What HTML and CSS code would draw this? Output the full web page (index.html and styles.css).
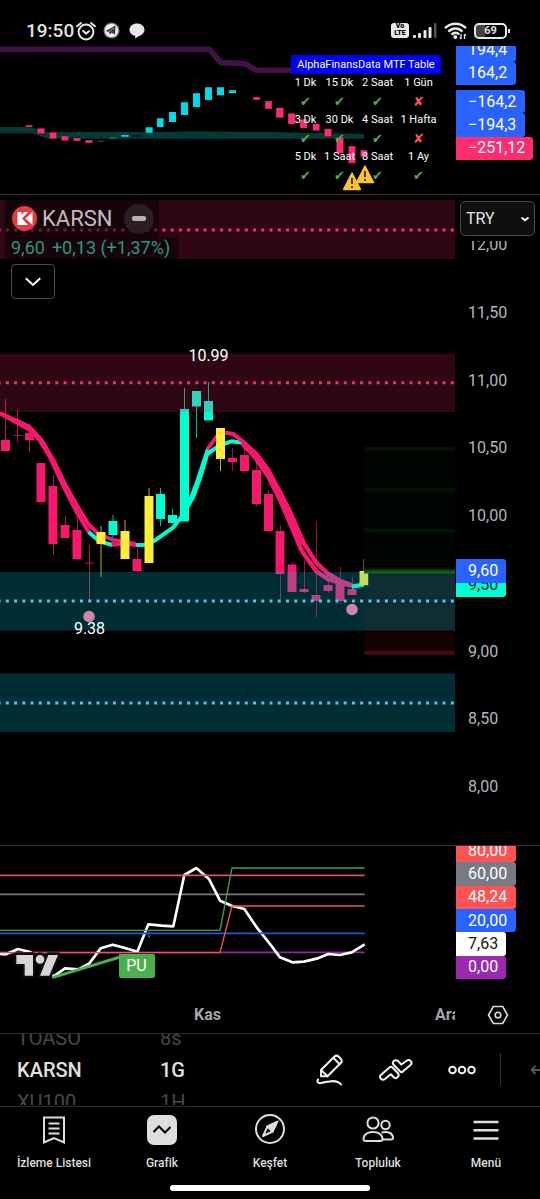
FILE: index.html
```html
<!DOCTYPE html>
<html lang="tr">
<head>
<meta charset="utf-8">
<meta name="viewport" content="width=device-width, initial-scale=1">
<title>KARSN</title>
<link rel="stylesheet" href="styles.css">
</head>
<body>
<header class="status">
  <span class="clock">19:50</span>
  <svg class="st-alarm" width="20" height="20" viewBox="0 0 20 20" fill="none" stroke="#e8e8e8" stroke-width="2" stroke-linecap="round"><circle cx="10" cy="11" r="7.4"/><path d="M1 5.2 5 2M19 5.2 15 2M7.2 10l2.8 2.6 3-2.4"/></svg>
  <svg class="st-tg" width="17" height="17" viewBox="0 0 17 17"><circle cx="8.500" cy="8.500" r="8" fill="#777"/><circle cx="8.500" cy="8.500" r="6.800" fill="#eee"/><path d="M2.500 9 12.500 3.500 12 12.500 8.500 10.800 6.500 12.500 6 10Z" fill="#3a3a3a"/><path d="M6 10 11 6" stroke="#999"/></svg>
  <svg class="st-chat" width="16" height="16" viewBox="0 0 16 16"><path d="M8 .5c4.200 0 7.500 2.600 7.500 6.300 0 3.200-3 5.500-5.500 6.300L6 15.500l.3-2.600C3 12.500.5 10 .5 6.800.5 3.100 3.800.5 8 .5Z" fill="#e8e8e8"/></svg>
  <span class="volte"><span>Vo</span><span>LTE</span></span>
  <svg class="st-signal" width="24" height="16" viewBox="0 0 24 16" fill="#e8e8e8"><rect x="0" y="12" width="3" height="3" rx="1"/><rect x="5" y="10" width="3" height="5" rx="1"/><rect x="10.500" y="7" width="3" height="8" rx="1"/><rect x="15.500" y="4" width="3" height="11" rx="1"/><rect x="21" y="0" width="2.500" height="15" rx="1" fill="#555"/></svg>
  <svg class="st-wifi" width="23" height="18" viewBox="0 0 23 18" fill="none" stroke="#e8e8e8" stroke-width="2.400"><path d="M1 6.200C7 .3 16 .3 22 6.200M4.300 9.600C8.500 5.500 14.500 5.500 18.500 9.600M7.500 12.700C10 10.200 13 10.200 15.300 12.500"/><circle cx="11.300" cy="15" r="1" stroke-width="2"/><path d="M17 12v5M20.500 12v5" stroke-width="1.300"/><path d="m15.800 15.500 1.200 1.700M20.500 12l1.300 1.700" stroke-width="1.200"/></svg>
  <span class="battery">69</span>
</header>

<main>
  <section class="pane">
    <div class="plot">
      <svg viewBox="0 46 456 148">
        <g transform="scale(.33333)">
          <path d="M0 148H628L663 188 735 191 770 211H1090" fill="none" stroke="#3f1145" stroke-width="17"/>
          <path d="M0 381H90L145 396 520 396 560 394 810 396 1092 402V416H145L95 400H0Z" fill="#043a34"/>
          <path d="M76 375h22v6h-22zM112 385h22v16h-22zM148 397h22v19h-22zM184 408h22v14h-22zM220 414h22v9h-22zM256 420h22v9h-22zM292 422h22v3h-22zM759 291h21v9h-21zM795 303h21v24h-21zM828 323h23v30h-23zM864 340h22v33h-22zM900 358h22v27h-22zM938 371h21v21h-21zM973 386h22v24h-22zM1009 412h22v48h-22zM1045 438h22v52h-22zM1081 450h21v20h-21z" fill="#ff2d6f" stroke="#000" stroke-width="1"/>
          <path d="M364 405h22v5h-22zM437 382h21v16h-21zM471 355h20v26h-20zM507 336h21v30h-21zM543 307h21v38h-21zM579 280h21v41h-21zM615 262h21v38h-21zM651 262h21v24h-21zM687 271h21v8h-21z" fill="#00d9e8"/>
          <path d="M328 412h22v4h-22z" fill="#277a6c"/>
          <path d="M398 405h26v5h-26z" fill="#001411"/>
        </g>
        <g fill="#ffc22e" stroke="#ffc22e" stroke-width="1.500" stroke-linejoin="round">
          <path d="M352 173 360.500 189.500H343.500Z"/><path d="M365 166 373.500 182.500H356.500Z"/>
        </g>
        <path d="M352 178v6M352 186v2M365 171v6M365 179v2" stroke="#2b2b2b" stroke-width="1.800"/>
      </svg>
      <table class="mtf">
        <caption>AlphaFinansData MTF Table</caption>
        <colgroup><col class="c1"><col class="c2"><col class="c3"><col class="c4"></colgroup>
        <tbody>
          <tr><th>1 Dk</th><th>15 Dk</th><th>2 Saat</th><th>1 Gün</th></tr>
          <tr class="marks"><td>✔</td><td>✔</td><td>✔</td><td class="no">✘</td></tr>
          <tr><th>3 Dk</th><th>30 Dk</th><th>4 Saat</th><th>1 Hafta</th></tr>
          <tr class="marks"><td>✔</td><td>✔</td><td>✔</td><td class="no">✘</td></tr>
          <tr><th>5 Dk</th><th>1 Saat</th><th>8 Saat</th><th>1 Ay</th></tr>
          <tr class="marks"><td>✔</td><td>✔</td><td>✔</td><td>✔</td></tr>
        </tbody>
      </table>
    </div>
    <div class="axis">
      <div class="tags tags-top"><span class="tag blue w60">194,4</span><span class="tag blue w60">164,2</span></div>
      <div class="tags tags-low"><span class="tag blue w69">−164,2</span><span class="tag blue w69">−194,3</span><span class="tag rose w77">−251,12</span></div>
    </div>
  </section>

  <section class="pane">
    <div class="plot">
      <svg viewBox="0 195 456 650">
        <g stroke="#f5186c" stroke-width="1">
          <path d="M5.500 399V451M17.500 410V442M13 435.500H22M29.500 430V452M41.500 463V503.500M53.500 475V555M65.500 516V538M77.500 517V559M89.500 545V600M85 563H94M137.500 546V572" opacity=".75"/>
          <path d="M232.500 448V471M244.500 447V471M256.500 463V507M268.500 490V532M280.500 525V599M292.500 562V592M304.500 560V593M316.500 521V617M328.500 580V593M340.500 567V604M352.500 577V595" opacity=".65"/>
        </g>
        <path d="M1 440h9v11h-9zM25 433h9v7h-9zM36.500 463h9v39h-9zM48.500 486h9v58h-9zM60.500 525h9v13h-9zM72.500 530h9v29h-9zM132.500 559h9v12h-9zM228 458h9v4h-9zM240 455h9v16h-9zM252 470h9v34h-9zM264 494h9v37h-9zM275.500 531h9v43h-9zM287.500 564.500h9v27.500h-9zM299.500 589h9v3h-9zM311.500 595h9v6h-9zM323.500 585h9v6h-9zM335.500 582h9v19h-9zM347.500 589h9v6h-9z" fill="#f5186c"/>
        <g fill="#00ffd0" stroke="none">
          <path d="M108.500 521h9v14h-9zM156 494h9v25h-9zM168 515h9v8h-9zM180 409h9v112.500h-9zM192 391h9v15.500h-9zM204 401h9v19.500h-9z"/>
          <path d="M112.500 515h1v29h-1zM160 488h1v38h-1zM172 509h1v14h-1zM184 388h1v22h-1zM196 391h1v47h-1zM208 382h1v20h-1z" opacity=".75"/>
        </g>
        <g fill="none" stroke-linejoin="round">
          <g transform="translate(0 380) scale(.33333)" stroke-width="12">
            <path d="M405 495 435 494 465 481 520 442 545 410 580 350 603 285 622 222 660 195 695 184 728 188" stroke="#00ffd0"/>
            <path d="M545 410 565 375 590 310 624 207" stroke="#00ffd0"/>
            <path d="M265 455 300 485 338 495" stroke="#00ffd0"/>
            <path d="M335 494 375 491 408 495" stroke="#f5186c"/>
            <path d="M0 100 50 122 88 140 125 180 160 240 195 312 230 375 265 432 295 462 340 480 375 486 408 492" stroke="#f5186c"/>
            <path d="M0 100 40 122 90 150 120 182 150 232 190 318 230 396 266 456" stroke="#f5186c"/>
            <path d="M5 103 90 146 122 181 155 236 193 318 205 342" stroke="#f5186c"/>
            <path d="M622 208 650 170 675 158 698 161 733 188 770 222 808 275" stroke="#f5186c"/>
          </g>
          <g transform="translate(200 400) scale(.33333)" stroke="#f5186c" stroke-width="13">
            <path d="M125 130 168 162 205 210 240 275 275 345 312 430 348 487 385 522 420 542 457 556"/>
            <path d="M130 135 165 172 205 230 240 300 270 370 305 452 348 513 385 538 420 548 455 558"/>
            <path d="M150 152 168 168 205 220 240 288 272 358 304 436"/>
            <path d="M455 560 492 554" stroke="#00ffd0"/>
          </g>
        </g>
        <path d="M96.500 532h9v12h-9zM120.500 531h9v28h-9zM144.500 496h9v67h-9zM216 428h9v31h-9zM359.500 571h9v14.500h-9z" fill="#ffec3b"/>
        <path d="M101 526V577M125 520V532M149 488V497M220.500 458V471M364 559V572" stroke="#ffec3b" stroke-width="1" opacity=".75"/>
        <path d="M364 448H455V571H364Z" fill="#010501"/>
        <path d="M364 449H455M364 489.500H455M364 530.500H455" stroke="#021205" stroke-width="4"/>
        <path d="M368.500 573.500H455V655H364V585.500H368.500Z" fill="#150000"/>
        <path d="M364 571.500H455" stroke="#075207" stroke-width="4"/>
        <path d="M364 653H455" stroke="#420a08" stroke-width="4"/>
        <g fill="#e91e63" fill-opacity=".2"><path d="M0 200H455V259H0ZM0 353.500H455V412H0Z"/></g>
        <g fill="#00bcd4" fill-opacity=".24"><path d="M0 572H455V630.500H0ZM0 673.500H455V732H0Z"/></g>
        <g stroke-width="3" stroke-dasharray="3 5.240">
          <path d="M-2.400 230H455M-2.400 382.700H455" stroke="#dc3c74"/>
          <path d="M-2.400 601H455M-2.400 703H455" stroke="#40cfe4"/>
        </g>
        <g fill="#cd86a5"><circle cx="89" cy="616.500" r="5.800"/><circle cx="352" cy="609.500" r="5.800"/></g>
        <g class="svg-label"><text x="208.500" y="361">10.99</text><text x="89.500" y="634">9.38</text></g>
      </svg>
      <div class="legend">
        <div class="symbol">
          <svg width="25" height="25" viewBox="0 0 25 25"><circle cx="12.500" cy="12.500" r="12.500" fill="#df3f40"/><path d="M5.500 6H9.500V9.500L12 6H16L10 12.500 16 19H5.500Z" fill="#fff"/><path d="M20.500 6V19L13.500 12.500Z" fill="#fff"/></svg>
          <span>KARSN</span>
          <button class="minus" aria-label="Gizle"><i></i></button>
        </div>
        <div class="quote"><span>9,60</span><span>+0,13 (+1,37%)</span></div>
        <button class="expand" aria-label="Göstergeler"><svg width="18" height="10" viewBox="0 0 18 10" fill="none" stroke="#fff" stroke-width="2" stroke-linecap="square"><path d="M2.500 2 9 8 15.500 2"/></svg></button>
      </div>
    </div>
    <div class="axis">
      <div class="currency">
        <select aria-label="Para birimi"><option>TRY</option></select>
        <svg width="10" height="6" viewBox="0 0 10 6" fill="none" stroke="#fff" stroke-width="1.800"><path d="M1.500 1.500 5 4.300 8.500 1.500"/></svg>
      </div>
      <div class="scale-clip">
        <ol class="scale">
          <li>12,00</li><li>11,50</li><li>11,00</li><li>10,50</li><li>10,00</li>
          <li class="now"><div class="last"><span class="tag blue front">9,60</span><span class="tag aqua">9,50</span></div></li>
          <li>9,00</li><li>8,50</li><li>8,00</li>
        </ol>
      </div>
    </div>
  </section>

  <section class="pane rsi">
    <div class="plot">
      <svg viewBox="0 846 456 150">
        <g transform="translate(0 830) scale(.33333)" fill="none">
          <g stroke-width="5">
            <path d="M0 193H1094" stroke="#77787c"/><path d="M0 367H1094" stroke="#9127a8"/>
          </g>
          <path d="M0 372 18 373 54 357 90 366 130 400 160 440 195 415 235 418 268 400 302 355 338 344 375 354 412 365 445 283 485 287 520 289 553 135 589 114 627 147 660 212 697 228 733 237 770 292 810 342 840 382 877 397 912 395 950 386 985 372 1020 375 1055 367 1094 343" stroke="#fff" stroke-width="8" stroke-linejoin="round"/>
          <g stroke-width="4">
            <path d="M0 136H1094" stroke="#e25153" stroke-width="5"/>
            <path d="M0 310H1094" stroke="#2753d8" stroke-width="5"/>
            <path d="M0 301H660L696 114H1094" stroke="#459e52"/>
            <path d="M0 368H660L696 228H1094" stroke="#f05450"/>
          </g>
          <path d="M447 300V322M442 316 447 322 452 316" stroke="#2753d8" stroke-width="3"/>
          <path d="M157 443 380 375" stroke="#4cae4f" stroke-width="9"/>
          <path d="M357 372H460Q465 372 465 377V438Q465 444 459 444H363Q357 444 357 438Z" fill="#4cae4f"/>
          <path d="M49 375H99V437H74V402H49ZM145 375H174L148 437H120ZM133 388A13 13 0 1 1 107 388A13 13 0 1 1 133 388Z" fill="#d6d6d6" stroke="#0c0c0c" stroke-width="16" stroke-linejoin="round" paint-order="stroke"/>
        </g>
        <g class="svg-label"><text x="136.500" y="971">PU</text></g>
      </svg>
    </div>
    <div class="axis">
      <div class="tags tags-rsi"><span class="tag red w60">80,00</span><span class="tag grey w60">60,00</span><span class="tag red w60">48,24</span><span class="tag blue w60">20,00</span><span class="tag white w50">7,63</span><span class="tag purple w50">0,00</span></div>
    </div>
  </section>

  <section class="pane time">
    <div class="months"><span>Kas</span><span class="next">Ara</span></div>
    <button class="settings" aria-label="Ayarlar"><svg width="22" height="20" viewBox="0 0 22 20" fill="none" stroke="#dcdcdc" stroke-width="1.600"><path d="M6.300 1.500H15.700L20.500 10 15.700 18.500H6.300L1.500 10Z"/><circle cx="11" cy="10" r="2.800"/></svg></button>
  </section>
</main>

<section class="toolbar">
  <div class="picker sym"><span class="off">TOASO</span><strong>KARSN</strong><span class="off">XU100</span></div>
  <div class="picker"><span class="off">8s</span><strong>1G</strong><span class="off">1H</span></div>
  <div class="tools">
    <button aria-label="Çizim"><svg width="28" height="32" viewBox="0 0 28 32" fill="none" stroke="#f2f2f2" stroke-width="2" stroke-linejoin="round" stroke-linecap="round"><path d="M5 16 18.500 2.500Q20.500.8 22.500 2.500L25 5Q26.500 7 25 8.800L11.500 22.300H5Z"/><path d="M17.500 4 23.500 10M5 16 11.500 22.300"/><path d="M2 25.500C.5 28.500 2.500 29.500 5 29 11 27.500 21 25 25 30.500"/></svg></button>
    <button aria-label="Göstergeler"><svg width="34" height="22" viewBox="0 0 34 22" fill="none" stroke="#f2f2f2" stroke-width="2" stroke-linejoin="round" stroke-linecap="round"><path d="M1.800 16 10.500 8.500Q12 7.300 13.500 8.500L19 14.200C21 17 17.500 20.500 15 18.500L11.800 15.300 6 20C3 22-.5 18.500 1.800 16Z"/><path d="M14.800 2C16.500.6 18.500 1.300 19.200 2.200L22.300 5.500 28 1.500C31-.2 34 3.500 31.500 6L23.500 12.800Q22.300 13.600 21.200 12.500L15 6.300C13.500 4.800 13.600 3.200 14.800 2Z"/></svg></button>
    <button aria-label="Daha fazla"><svg width="28" height="10" viewBox="0 0 28 10" fill="none" stroke="#f2f2f2" stroke-width="2"><circle cx="4.500" cy="5" r="3.300"/><circle cx="14" cy="5" r="3.300"/><circle cx="23.500" cy="5" r="3.300"/></svg></button>
  </div>
  <button class="undo" aria-label="Geri al"><svg width="10" height="10" viewBox="0 0 10 10" fill="none" stroke="#555" stroke-width="1.800"><path d="M5.500 1 1.500 5 5.500 9M1.500 5H10"/></svg></button>
</section>

<nav class="nav">
  <a href="#"><svg width="32" height="32" viewBox="0 0 32 32" fill="none" stroke="#dedede" stroke-width="2"><path d="M6 3.500H26V28.500L16 24 6 28.500Z"/><path d="M10.500 9.500H21.500M10.500 14.500H21.500M10.500 19.500H21.500"/></svg>İzleme Listesi</a>
  <a href="#"><svg width="32" height="32" viewBox="0 0 32 32"><rect x="1" y="1" width="30" height="30" rx="7" fill="#dedede"/><path d="M7.500 18 13 12.500 19 18.500 24.500 13" fill="none" stroke="#000" stroke-width="2"/></svg>Grafik</a>
  <a href="#"><svg width="32" height="32" viewBox="0 0 32 32" fill="none" stroke="#dedede" stroke-width="2"><circle cx="16" cy="15" r="14"/><path d="M23 8 13.500 12.500 9 22 18.500 17.500Z" stroke-linejoin="round"/><path d="M23 8 18.500 17.500 13.500 12.500Z" fill="#dedede"/></svg>Keşfet</a>
  <a href="#"><svg width="32" height="32" viewBox="0 0 32 32" fill="none" stroke="#dedede" stroke-width="2" stroke-linejoin="round"><circle cx="11" cy="9" r="5.600"/><circle cx="23.500" cy="11" r="4.200"/><path d="M4 27Q1 27 1.500 24C2.500 20 5 18 11 18S19.500 20 20.500 24Q21 27 18 27Z"/><path d="M19.500 18.500C25 17 30 18.500 31 23Q31.300 25.500 29 25.500H21"/></svg>Topluluk</a>
  <a href="#"><svg width="32" height="32" viewBox="0 0 32 32" stroke="#dedede" stroke-width="2.500"><path d="M3.500 8H28.500M3.500 16.200H28.500M3.500 24.500H28.500"/></svg>Menü</a>
  <div class="home-bar"></div>
</nav>
</body>
</html>
```
FILE: styles.css
```css
* { box-sizing: border-box; }
body {
  margin: 0;
  background: #000;
  color: #e0e0e0;
  font-family: Roboto, "Noto Sans", sans-serif;
  font-size: 16px;
}
button { background: none; border: 0; padding: 0; font: inherit; color: inherit; }
svg { display: block; flex: none; }

/* status bar */
.status {
  display: flex;
  align-items: center;
  height: 46px;
  padding: 15px 28px 0 26px;
}
.clock { font-size: 19px; font-weight: 500; line-height: 24px; margin-right: 2px; }
.st-tg { margin-left: 7px; }
.st-chat { margin-left: 9px; }
.volte {
  display: flex;
  flex-direction: column;
  margin-left: auto;
  width: 18px;
  height: 15px;
  border-radius: 3px;
  background: #e8e8e8;
  color: #000;
  font-size: 7px;
  font-weight: 900;
  line-height: 7px;
  text-align: center;
}
.st-signal { margin-left: 4px; }
.st-wifi { margin: 0 7px; }
.battery {
  position: relative;
  width: 33px;
  height: 16px;
  margin-right: 5px;
  border: 2px solid #e8e8e8;
  border-radius: 5px;
  background: linear-gradient(90deg, #444 30%, #000 30%);
  font-size: 11px;
  font-weight: 700;
  line-height: 12px;
  text-align: center;
}
.battery::after {
  content: "";
  position: absolute;
  right: -5px;
  top: 4px;
  width: 2px;
  height: 4px;
  background: #e8e8e8;
}

/* chart panes */
.pane {
  display: grid;
  grid-template-columns: minmax(0, 1fr) 84px;
  border-bottom: 1px solid #303238;
}
.plot { position: relative; }
.plot > svg { width: 100%; height: auto; }
.axis { overflow: hidden; color: #b4b5ba; }
.rsi { border-bottom: 0; }
.svg-label { fill: #fff; font-size: 16px; text-anchor: middle; }

/* axis tags */
.tags { display: flex; flex-direction: column; }
.tags-top { height: 47px; margin-top: -8px; margin-bottom: 5px; }
.tags-low { height: 70px; }
.tags-rsi { height: 140px; margin-top: -7px; }
.tag {
  display: flex;
  flex: 1;
  align-items: center;
  padding-left: 12px;
  border-radius: 0 3px 3px 0;
  color: #fff;
  line-height: 20px;
}
.w50 { width: 50px; }
.w60 { width: 60px; }
.w69 { width: 69px; }
.w77 { width: 77px; }
.blue { background: #2962ff; }
.rose { background: #ff2d6f; }
.red { background: #ff5252; }
.grey { background: #787b86; }
.purple { background: #9c27b0; }
.white { background: #fff; color: #131313; }
.aqua { background: #00ffd0; color: #06251f; }

/* multi time frame table */
.mtf {
  position: absolute;
  top: 9px;
  right: 15px;
  width: 150px;
  table-layout: fixed;
  border-collapse: collapse;
  color: #fff;
  font-size: 11px;
}
.mtf caption { height: 19px; background: #0000f5; font-size: 11px; line-height: 19px; }
.mtf th, .mtf td { height: 18px; padding: 0; font-weight: 400; line-height: 18px; text-align: center; white-space: nowrap; }
.mtf .marks td { height: 19px; color: #4caf50; font-family: "DejaVu Sans", sans-serif; font-size: 13px; }
.mtf .marks .no { color: #ff5252; }
.c1 { width: 29px; }
.c2 { width: 39px; }
.c3 { width: 37px; }
.c4 { width: 45px; }

/* symbol legend */
.legend {
  position: absolute;
  top: 5px;
  left: 5px;
  display: flex;
  flex-direction: column;
  align-items: flex-start;
}
.symbol, .quote { background: rgba(0, 0, 0, .5); }
.symbol {
  display: flex;
  align-items: center;
  height: 37px;
  padding: 0 5px 0 7px;
  color: #c4bcc2;
  font-size: 22px;
}
.symbol > span { margin: 0 12px 0 5px; }
.minus {
  display: grid;
  place-items: center;
  width: 30px;
  height: 30px;
  border-radius: 50%;
  background: #2c1c23;
}
.minus i { width: 14px; height: 5px; border-radius: 2px; background: #b0b0b0; }
.quote {
  display: flex;
  gap: 7px;
  padding: 0 8px 0 6px;
  color: #289a80;
  font-size: 18px;
  line-height: 22px;
}
.expand {
  display: grid;
  place-items: center;
  width: 44px;
  height: 35px;
  margin: 5px 0 0 6px;
  border: 1px solid #4a4a4a;
  border-radius: 4px;
}

/* price scale */
.currency { position: relative; margin: 6px 5px 5px 4px; }
.currency select {
  display: block;
  width: 100%;
  height: 35px;
  padding: 0 5px;
  border: 1px solid #4a4a4a;
  border-radius: 5px;
  background: #0f0f0f;
  color: #e6e6e6;
  font: 16px Roboto, sans-serif;
  appearance: none;
}
.currency svg { position: absolute; right: 5px; top: 15px; pointer-events: none; }
.scale-clip { overflow: hidden; }
.scale {
  display: flex;
  flex-direction: column;
  justify-content: space-between;
  height: 562px;
  margin: -6px 0 0;
  padding: 0;
  list-style: none;
  line-height: 20px;
}
.scale li { padding-left: 12px; height: 20px; }
.scale .now { position: relative; padding: 0; }
.last { position: absolute; top: -15px; left: 0; width: 50px; }
.last .tag { position: relative; height: 24px; }
.last .front { z-index: 1; margin-bottom: -10px; border-radius: 0 3px 0 0; }

/* time axis */
.time { height: 37px; border: 0; }
.months {
  display: flex;
  justify-content: space-between;
  align-items: center;
  overflow: hidden;
  margin-right: 1px;
  padding-left: 194px;
  color: #a5a5aa;
  font-weight: 700;
}
.months .next { margin-right: -5px; }
.settings { display: grid; place-items: center; }

/* toolbar */
.toolbar {
  display: flex;
  height: 73px;
  overflow: hidden;
  border-top: 1px solid #2b2b2b;
}
.picker {
  display: flex;
  flex-direction: column;
  justify-content: center;
  height: 71px;
  overflow: hidden;
  font-size: 20px;
  line-height: 32px;
}
.sym { width: 143px; margin-left: 17px; }
.picker strong { font-weight: 500; }
.off { color: #484848; }
.tools { display: flex; margin-left: auto; padding-right: 5px; }
.tools button { display: grid; place-items: center; width: 66px; }
.undo {
  display: flex;
  align-items: center;
  justify-content: flex-end;
  width: 40px;
  height: 33px;
  margin-top: 19px;
  border-left: 1px solid #363636;
}

/* bottom navigation */
.nav {
  display: grid;
  grid-template-columns: repeat(5, 1fr);
  align-content: start;
  border-top: 1px solid #2b2b2b;
  padding: 7px 0 8px;
}
.nav a {
  display: flex;
  flex-direction: column;
  align-items: center;
  gap: 9px;
  color: #dedede;
  font-size: 12px;
  font-weight: 500;
  line-height: 16px;
  text-decoration: none;
}
.home-bar {
  grid-column: 1 / -1;
  justify-self: center;
  width: 200px;
  height: 6px;
  margin-top: 14px;
  border-radius: 3px;
  background: #fff;
}
```
